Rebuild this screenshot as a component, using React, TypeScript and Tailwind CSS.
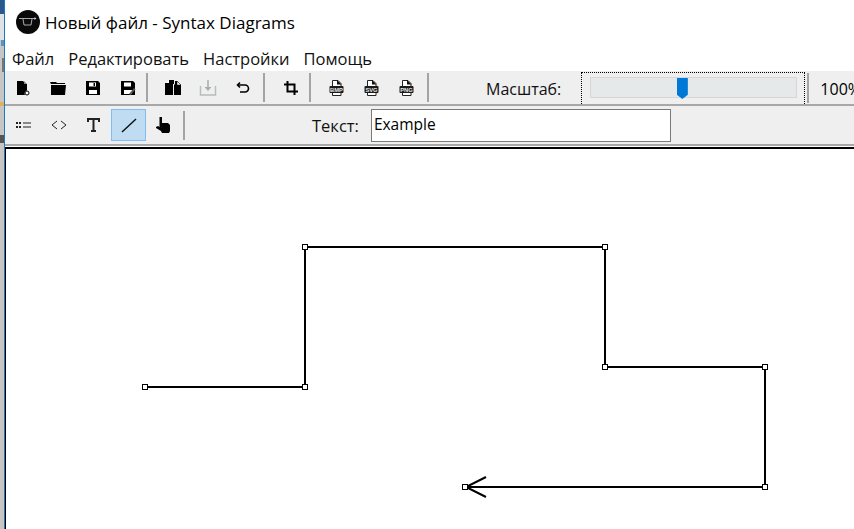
const SYS = "font-['Open_Sans','Noto_Sans',sans-serif]";

function Sep({ className }: { className: string }) {
  return <div className={`h-[29px] w-[2px] shrink-0 bg-[#a4a4a4] ${className}`} />;
}

function ToolBtn({ children, active }: { children: React.ReactNode; active?: boolean }) {
  return (
    <div
      className={`flex h-[32px] w-[35px] shrink-0 items-center justify-center ${
        active ? "border border-[#7fbef5] bg-[#bfdcf3]" : ""
      }`}
    >
      {children}
    </div>
  );
}

function FileBadge({ label }: { label: string }) {
  return (
    <svg width="15" height="16" viewBox="0 0 15 16">
      <path d="M3.500 .5h5.500l3 3v12h-8.500z" fill="#fff" stroke="#222" />
      <path d="M8 0v4.500h4.500z" fill="#111" />
      <rect x="0.500" y="6" width="14" height="7" rx="1" fill="#1a1a1a" />
      <text x="7.500" y="11.800" textAnchor="middle" fontSize="5.800" fontWeight="700" fill="#e8e8e8" fontFamily="Liberation Sans, sans-serif">
        {label}
      </text>
    </svg>
  );
}

export default function App() {
  return (
    <div className={`relative flex h-[529px] w-[854px] overflow-hidden bg-white ${SYS}`}>
      {/* desktop showing behind the window */}
      <div className="relative w-[4px] bg-[#c6c6c6]">
        <div className="absolute left-0 top-0 h-[14px] w-[4px] bg-[#2a5a8c]" />
        <div className="absolute left-0 top-[14px] h-[26px] w-[4px] bg-[#dfe3e6]" />
        <div className="absolute left-[1px] top-[40px] h-[6px] w-[3px] bg-[#5b93c4]" />
        <div className="absolute left-[2px] top-[58px] h-[14px] w-[2px] bg-[#777777]" />
        <div className="absolute left-0 top-[102px] h-[4px] w-[4px] bg-[#e0b060]" />
        <div className="absolute left-0 top-[135px] h-[8px] w-[4px] bg-[#555555]" />
      </div>
      <div className="w-[1px] bg-[#1f78c4]" />

      <div className="flex min-w-0 flex-1 flex-col">
        <div className="flex h-[44px] items-center pl-[11px]">
          <svg width="24" height="24" viewBox="0 0 24 24">
            <circle cx="12" cy="12" r="12" fill="#0a0a0a" />
            <path d="M3 8.500h16M7 9l1 6h7l1-6" fill="none" stroke="#cfcfcf" strokeWidth="0.800" />
            <path d="M18.500 7l2 1.500-2 1.500z" fill="#cfcfcf" />
          </svg>
          <span className="ml-[5px] text-[17px] leading-none text-black">Новый файл - Syntax Diagrams</span>
        </div>

        <div className="flex h-[27px] items-center gap-[14px] pl-[7px] pt-[3px] text-[16.500px] text-[#111]">
          <span>Файл</span>
          <span>Редактировать</span>
          <span>Настройки</span>
          <span>Помощь</span>
        </div>

        <div className="flex h-[35px] items-center border-b-2 border-[#a8a8a8] bg-[#efefef]">
          <ToolBtn>
            <svg width="16" height="16" viewBox="0 0 16 16">
              <path d="M2 1h6l1 1v2h3v6.500a3 3 0 0 0-2 4.500H2z" fill="#000" />
              <path d="M9 1l3 3H9z" fill="#000" opacity="0.450" />
              <circle cx="12" cy="13" r="2" fill="#fff" stroke="#000" />
            </svg>
          </ToolBtn>
          <ToolBtn>
            <svg width="16" height="16" viewBox="0 0 16 16">
              <path d="M0 2h6l1 1h8v1H1zM1 5h15l-1 10H1z" fill="#000" />
            </svg>
          </ToolBtn>
          <ToolBtn>
            <svg width="16" height="16" viewBox="0 0 16 16">
              <path d="M1 1h12l2 2v12H1z" fill="#000" />
              <path d="M4 2.500h7v4H4zM4 10h8v4H4z" fill="#fff" />
              <rect x="8.500" y="3" width="1.500" height="3" fill="#000" />
            </svg>
          </ToolBtn>
          <ToolBtn>
            <svg width="16" height="16" viewBox="0 0 16 16">
              <path d="M1 1h12l2 2v12H1z" fill="#000" />
              <path d="M4 2.500h7v4H4zM4 10h8v4H4z" fill="#fff" />
              <path d="M9 14l5-6 1.500 1.500-5 5.500z" fill="#555" />
            </svg>
          </ToolBtn>
          <Sep className="ml-[1px] mr-[7px]" />
          <ToolBtn>
            <svg width="16" height="16" viewBox="0 0 16 16">
              <path d="M0 3h4V0h5v4H8v11H0z" fill="#000" />
              <path d="M4 0v3H1z" fill="#fff" />
              <path d="M9 4.500h1V1h2l4 4v10H9z" fill="#000" />
              <path d="M12 1v4h4z" fill="#fff" stroke="#000" strokeWidth="0.500" />
            </svg>
          </ToolBtn>
          <ToolBtn>
            <svg width="18" height="16" viewBox="0 0 18 16">
              <path d="M1.500 6v9h15V6" fill="none" stroke="#b8bcbc" strokeWidth="1.500" />
              <path d="M9 0v8" stroke="#a9adad" strokeWidth="1.500" />
              <path d="M5.500 7h7L9 11z" fill="#a9adad" />
            </svg>
          </ToolBtn>
          <ToolBtn>
            <svg width="14" height="14" viewBox="0 0 14 14">
              <path d="M4 1.500L1.500 4 4 6.500" fill="none" stroke="#000" strokeWidth="1.600" />
              <path d="M2 4h7a3.500 3.500 0 0 1 0 7H4" fill="none" stroke="#000" strokeWidth="1.600" />
            </svg>
          </ToolBtn>
          <Sep className="ml-[3px] mr-[8px]" />
          <ToolBtn>
            <svg width="14" height="14" viewBox="0 0 14 14">
              <path d="M3.500 0v10.500H14M0 3.500h10.500V14" fill="none" stroke="#000" strokeWidth="2" />
            </svg>
          </ToolBtn>
          <Sep className="ml-[1px] mr-[8px]" />
          <ToolBtn><FileBadge label="BMP" /></ToolBtn>
          <ToolBtn><FileBadge label="SVG" /></ToolBtn>
          <ToolBtn><FileBadge label="PNG" /></ToolBtn>
          <Sep className="ml-[3px]" />
          <span className="ml-[57px] shrink-0 pt-[3px] text-[16px] text-[#111]">Масштаб:</span>
          <div className="ml-[20px] flex h-[32px] w-[224px] shrink-0 justify-center self-end border-x border-t border-dotted border-black pt-[4px]">
            <div className="relative h-[21px] w-[207px] border border-[#d6d6d6] bg-[#e6e9e9]">
              <div className="absolute left-[86px] top-0 h-[21px] w-[11px] bg-[#0078d7] [clip-path:polygon(0_0,100%_0,100%_80%,50%_100%,0_80%)]" />
            </div>
          </div>
          <div className="ml-[2px] h-[30px] w-[2px] shrink-0 bg-[#a4a4a4]" />
          <span className="ml-[11px] shrink-0 pt-[3px] text-[16px] text-black">100%</span>
        </div>

        <div className="flex h-[40px] items-center border-b-2 border-[#a8a8a8] bg-[#efefef] pl-[1px]">
          <ToolBtn>
            <svg width="16" height="10" viewBox="0 0 16 10">
              <path d="M0 2h2v2H0zM3 2h2v2H3zM0 6h2v2H0zM3 6h2v2H3z" fill="#222" />
              <path d="M7 3h8M7 7h8" stroke="#222" strokeWidth="1.200" />
            </svg>
          </ToolBtn>
          <ToolBtn>
            <svg width="16" height="10" viewBox="0 0 16 10">
              <path d="M6 1L1 5l5 4M10 1l5 4-5 4" fill="none" stroke="#222" strokeWidth="1" />
            </svg>
          </ToolBtn>
          <ToolBtn>
            <svg width="13" height="14" viewBox="0 0 13 14">
              <path d="M1 4V1h11v3M6.500 1v12M4 13h5" fill="none" stroke="#222" strokeWidth="2" />
            </svg>
          </ToolBtn>
          <ToolBtn active>
            <svg width="18" height="18" viewBox="0 0 18 18">
              <path d="M2 16L16 3" stroke="#111" strokeWidth="1.500" />
            </svg>
          </ToolBtn>
          <ToolBtn>
            <svg width="15" height="16" viewBox="0 0 15 16">
              <path d="M3.500 0h2.500v6h6l2 2v6l-1 2H6l-1-2-5-3v-1l2-1 1.500 1z" fill="#000" />
            </svg>
          </ToolBtn>
          <Sep className="ml-[2px]" />
          <span className="ml-[127px] pt-[3px] text-[16.500px] text-[#111]">Текст:</span>
          <div className="ml-[12px] h-[33px] w-[300px] border border-[#7a7a7a] bg-white pl-[2px] text-[15.500px] leading-[28px] text-black">
            Example
          </div>
        </div>

        {/* diagram canvas */}
        <div className="relative mt-[1px] flex-1 border-l border-t-2 border-black">
          <svg width="848" height="380" viewBox="6 149 848 380" className="absolute left-0 top-0">
            <path
              d="M145.500 387H305V247H605V367H765V487H466M486 477L466 487L486 497"
              fill="none"
              stroke="#000"
              strokeWidth="2"
            />
            {[
              [145, 387],
              [305, 387],
              [305, 247],
              [605, 247],
              [605, 367],
              [765, 367],
              [765, 487],
              [465, 487],
            ].map(([x, y]) => (
              <rect key={`${x}-${y}`} x={x - 2.5} y={y - 2.5} width="5" height="5" fill="#fff" stroke="#000" />
            ))}
          </svg>
        </div>
      </div>
    </div>
  );
}
